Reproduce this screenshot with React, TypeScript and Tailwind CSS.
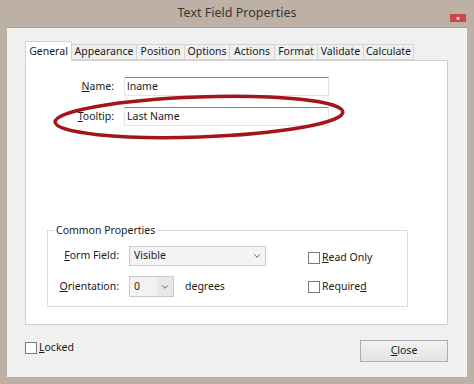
import { ChevronDown } from "lucide-react"

const TABS = [
  { name: "Appearance", w: "w-[65px]" },
  { name: "Position", w: "w-[48px]" },
  { name: "Options", w: "w-[45px]" },
  { name: "Actions", w: "w-[45px]" },
  { name: "Format", w: "w-[43px]" },
  { name: "Validate", w: "w-[46px]" },
  { name: "Calculate", w: "w-[50px]" },
]

function Check({ children }: { children: React.ReactNode }) {
  return (
    <div className="flex items-center gap-[2px]">
      <span className="size-[12px] border border-[#7a7a7a] bg-white" />
      <span>{children}</span>
    </div>
  )
}

export default function App() {
  return (
    <div className="relative w-[474px] h-[384px] bg-[#bdb1a5] flex flex-col text-[10.5px] text-[#1a1a1a] font-['Noto_Sans',sans-serif] overflow-hidden">
      {/* title bar */}
      <div className="h-[27px] flex items-center justify-center relative">
        <span className="text-[12.5px] text-[#3b3632]">Text Field Properties</span>
        <span className="absolute right-[8px] top-[14px] w-[16px] h-[8px] bg-[#c9464b] flex items-center justify-center text-white text-[7px] leading-none font-bold">×</span>
      </div>

      {/* client */}
      <div className="flex-1 mx-[7px] mb-[7px] bg-[#f0f0f0] border-t border-[#a99d92] pl-[18px] pr-[19px] pt-[13px] flex flex-col">
        <div className="flex items-end h-[20px] relative z-10">
          <div className="w-[47px] h-[20px] bg-white border border-b-0 border-[#d4d4d4] flex items-center justify-center">General</div>
          {TABS.map(t => (
            <div key={t.name} className={`${t.w} h-[16px] bg-[#f0f0f0] border border-l-0 border-[#d4d4d4] flex items-center justify-center mb-[1px]`}>{t.name}</div>
          ))}
        </div>

        <div className="w-[423px] h-[265px] bg-white border border-[#cfcfcf] -mt-[1px] flex flex-col pt-[16px]">
          <div className="flex items-center h-[19px]">
            <span className="w-[88px] text-right"><u>N</u>ame:</span>
            <div className="ml-[10px] w-[205px] h-[19px] bg-white border border-[#e4e4e4] border-t-[#8a8a8a] flex items-center px-[2px]">lname</div>
          </div>
          <div className="flex items-center h-[19px] mt-[11px]">
            <span className="w-[88px] text-right"><u>T</u>ooltip:</span>
            <div className="ml-[10px] w-[205px] h-[19px] bg-white border border-[#e4e4e4] border-t-[#8a8a8a] flex items-center px-[2px]">Last Name</div>
          </div>

          <fieldset className="ml-[21px] mt-[97px] w-[361px] h-[84px] border border-[#dcdcdc] flex">
            <legend className="ml-[6px] px-[2px] leading-[14px]">Common Properties</legend>
            <div className="flex w-full pt-[9px]">
              <div className="flex flex-col">
                <div className="flex items-center h-[20px]">
                  <span className="w-[71px] text-right"><u>F</u>orm Field:</span>
                  <div className="ml-[10px] w-[137px] h-[20px] bg-[#f4f4f4] border border-[#c9c9c9] flex items-center pl-[4px] pr-[3px]">
                    <span className="flex-1">Visible</span>
                    <ChevronDown size={10} strokeWidth={2} className="text-[#444]" />
                  </div>
                </div>
                <div className="flex items-center h-[21px] mt-[10px]">
                  <span className="w-[71px] text-right"><u>O</u>rientation:</span>
                  <div className="ml-[10px] w-[45px] h-[21px] bg-[#f2f2f2] border border-[#c9c9c9] flex items-center pl-[4px]">
                    <span className="flex-1">0</span>
                    <span className="w-[16px] h-full flex items-center justify-center bg-[#e8e8e8]">
                      <ChevronDown size={10} strokeWidth={2} className="text-[#444]" />
                    </span>
                  </div>
                  <span className="ml-[11px]">degrees</span>
                </div>
              </div>
              <div className="ml-[42px] flex flex-col pt-[4px] gap-[13px]">
                <Check><u>R</u>ead Only</Check>
                <Check>Require<u>d</u></Check>
              </div>
            </div>
          </fieldset>
        </div>

        <div className="flex items-start justify-between mt-[15px]">
          <Check><u>L</u>ocked</Check>
          <button className="w-[88px] h-[22px] bg-gradient-to-b from-[#f2f2f2] to-[#e4e4e4] border border-[#adadad]">
            <u>C</u>lose
          </button>
        </div>
      </div>

      {/* red annotation */}
      <svg className="absolute inset-0 pointer-events-none" width="474" height="384">
        <ellipse cx="199" cy="117" rx="144" ry="20" fill="none" stroke="#a3141c" strokeWidth="3.5" transform="rotate(-2 199 117)" />
      </svg>
    </div>
  )
}
